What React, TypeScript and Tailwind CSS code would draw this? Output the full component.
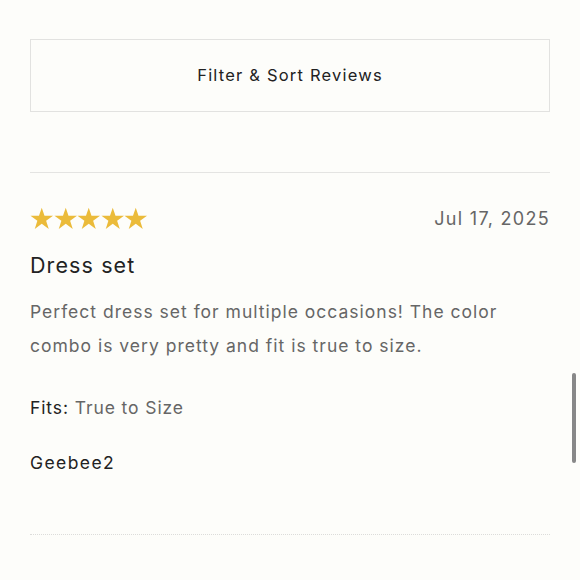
import React from "react";

function Star() {
  return (
    <svg width="23.5" height="23" viewBox="0 0 24 23" className="shrink-0">
      <path
        d="M12 0.5l2.82 8.2h8.68l-7.02 5.1 2.68 8.3L12 16.95 4.84 22.1l2.68-8.3L0.5 8.7h8.68z"
        fill="#ebbb3a"
      />
    </svg>
  );
}

export default function App() {
  return (
    <div
      className="relative w-[580px] h-[580px] overflow-hidden bg-[#fdfdfa] text-[#222]"
      style={{ fontFamily: "Inter, 'Noto Sans', sans-serif" }}
    >
      <div className="px-[30px] pt-[39px]">
        <div className="h-[73px] border border-[#e2e2e0] flex items-center justify-center text-[16.5px] tracking-[1.2px] text-[#222]">
          Filter &amp; Sort Reviews
        </div>
        <div className="mt-[60px] border-t border-[#e4e4e2]" />
        <div className="mt-[32px] flex items-center justify-between">
          <div className="flex">
            <Star />
            <Star />
            <Star />
            <Star />
            <Star />
          </div>
          <div className="text-[18px] tracking-[1.3px] text-[#666]">Jul 17, 2025</div>
        </div>
        <div className="mt-[18px] text-[21.5px] tracking-[1.1px] leading-[30px] text-[#222]">Dress set</div>
        <p className="mt-[15px] text-[17.5px] leading-[34px] tracking-[1px] text-[#666]">
          Perfect dress set for multiple occasions! The color combo is very pretty and fit is true to size.
        </p>
        <div className="mt-[32px] text-[17.5px] tracking-[0.9px] leading-[26px]">
          <span className="text-[#222]">Fits:</span>
          <span className="text-[#666]"> True to Size</span>
        </div>
        <div className="mt-[29px] text-[17.5px] tracking-[1.4px] leading-[26px] text-[#222]">Geebee2</div>
        <div className="mt-[58px] border-t border-dotted border-[#dcdcda]" />
      </div>
      <div className="absolute left-[572px] top-[373px] w-[4px] h-[90px] rounded-full bg-[#888]" />
    </div>
  );
}
